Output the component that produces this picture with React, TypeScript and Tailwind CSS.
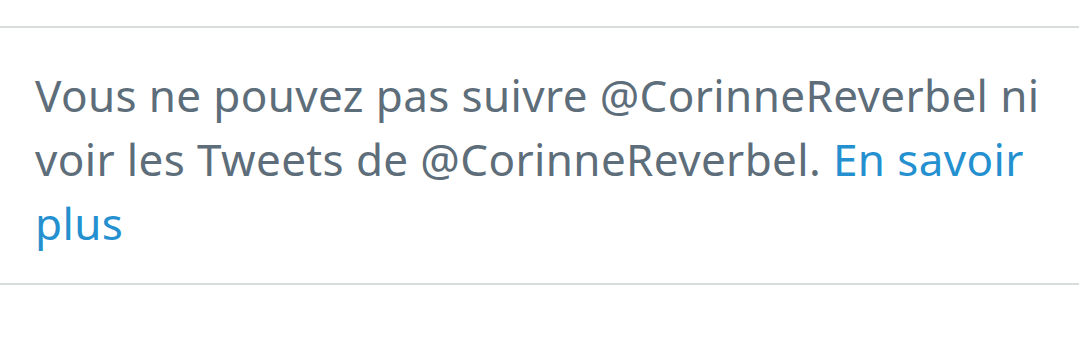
export default function App() {
  return (
    <div className="w-[1079px] h-[359px] bg-white overflow-hidden" style={{ fontFamily: "'Noto Sans', Roboto, sans-serif" }}>
      <div className="h-[26px]" />
      <div className="border-t-2 border-b-2 border-[#d9dcdd] pl-[35px] pr-[16px] pt-[35px] pb-[28px]">
        <p className="text-[44px] leading-[64px] tracking-[0.38px] text-[#5d6d79]">
          Vous ne pouvez pas suivre @CorinneReverbel ni voir les Tweets de @CorinneReverbel.{" "}
          <a className="text-[#2490cf]">En savoir plus</a>
        </p>
      </div>
    </div>
  );
}
